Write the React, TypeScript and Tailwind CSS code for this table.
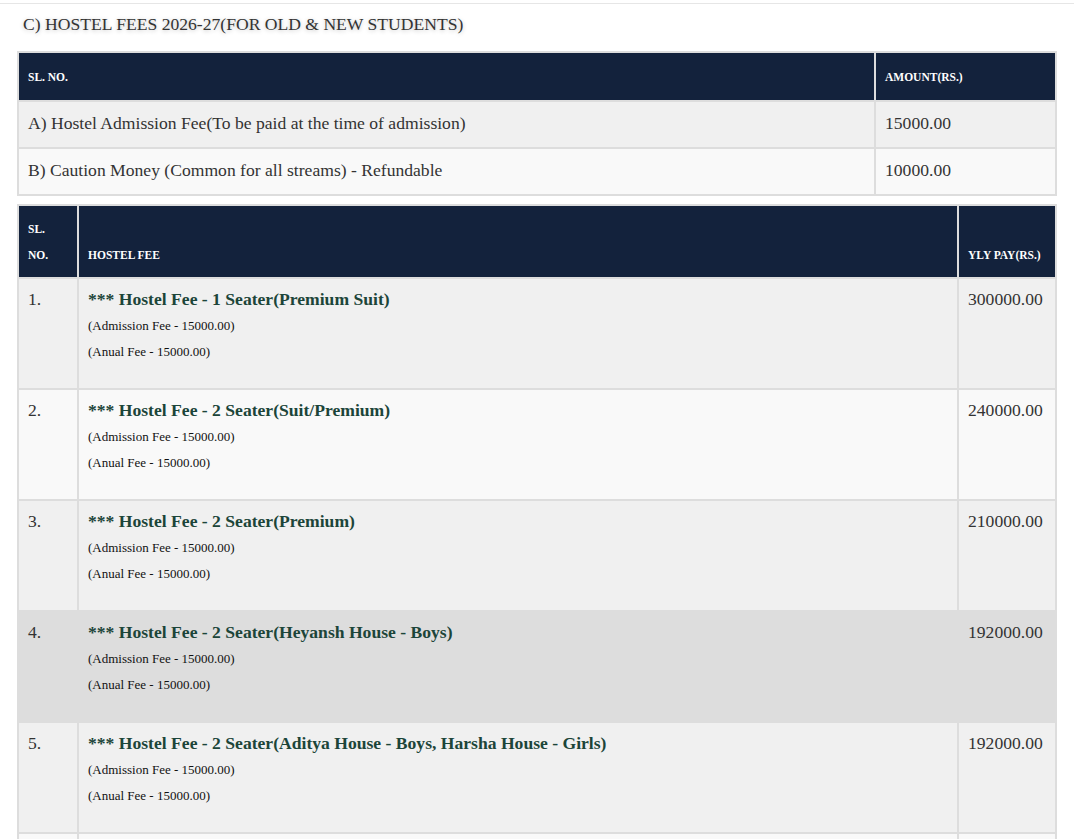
import React from "react";

const rows = [
  { n: "1.", t: "*** Hostel Fee - 1 Seater(Premium Suit)", a: "300000.00", bg: "bg-[#f0f0f0]" },
  { n: "2.", t: "*** Hostel Fee - 2 Seater(Suit/Premium)", a: "240000.00", bg: "bg-[#f9f9f9]" },
  { n: "3.", t: "*** Hostel Fee - 2 Seater(Premium)", a: "210000.00", bg: "bg-[#f0f0f0]" },
  { n: "4.", t: "*** Hostel Fee - 2 Seater(Heyansh House - Boys)", a: "192000.00", bg: "bg-[#dddddd]" },
  { n: "5.", t: "*** Hostel Fee - 2 Seater(Aditya House - Boys, Harsha House - Girls)", a: "192000.00", bg: "bg-[#f0f0f0]" },
  { n: "6.", t: "*** Hostel Fee - 2 Seater(Standard)", a: "180000.00", bg: "bg-[#f9f9f9]" },
];

const thBase = "border-2 border-[#dddddd] bg-[#13223c] text-white text-[11.5px] font-bold leading-[26px] pl-[9px] pr-[4px] align-bottom text-left";
const th1 = thBase + " pt-[11px] pb-[10px]";
const th2 = thBase + " pt-[10px] pb-[9px]";
const td = "border-2 border-[#dddddd] text-[#333] text-[17.6px] px-[9px] align-top text-left";

export default function App() {
  return (
    <div className="min-h-[839px] bg-white" style={{ fontFamily: '"Liberation Serif", "Times New Roman", serif' }}>
      <div className="pt-[3px]">
        <div className="border-t border-[#e6e6e6]" />
      </div>
      <div className="px-[17px]">
        <h2
          className="pl-[6px] pt-[9px] pb-[16px] text-[17.6px] leading-[22px] text-[#333] font-normal"
          style={{ textShadow: "0 1px 4px rgba(0,0,0,0.25)" }}
        >
          C) HOSTEL FEES 2026-27(FOR OLD &amp; NEW STUDENTS)
        </h2>
        <table className="w-full border-collapse border-2 border-[#dddddd]">
          <thead>
            <tr>
              <th className={th1}>SL. NO.</th>
              <th className={th1 + " w-[181px]"}>AMOUNT(RS.)</th>
            </tr>
          </thead>
          <tbody>
            <tr className="bg-[#f0f0f0]">
              <td className={td + " leading-[26px] pt-[8px] pb-[11px]"}>A) Hostel Admission Fee(To be paid at the time of admission)</td>
              <td className={td + " leading-[26px] pt-[8px] pb-[11px]"}>15000.00</td>
            </tr>
            <tr className="bg-[#f9f9f9]">
              <td className={td + " leading-[26px] pt-[8px] pb-[11px]"}>B) Caution Money (Common for all streams) - Refundable</td>
              <td className={td + " leading-[26px] pt-[8px] pb-[11px]"}>10000.00</td>
            </tr>
          </tbody>
        </table>
        <table className="mt-[8px] w-full border-collapse border-2 border-[#dddddd]">
          <thead>
            <tr>
              <th className={th2 + " w-[60px]"}>
                SL.
                <br />
                NO.
              </th>
              <th className={th2}>HOSTEL FEE</th>
              <th className={th2 + " w-[98px]"}>YLY PAY(RS.)</th>
            </tr>
          </thead>
          <tbody>
            {rows.map((r) => (
              <tr key={r.n} className={r.bg}>
                <td className={td + " leading-[28px] pt-[6px] pb-[23px]"}>{r.n}</td>
                <td className={td + " leading-[28px] pt-[6px] pb-[23px]"}>
                  <div className="font-bold text-[#1c4539] text-[17.6px] leading-[28px]">{r.t}</div>
                  <div className="text-[13px] leading-[26px] text-[#111]">(Admission Fee - 15000.00)</div>
                  <div className="text-[13px] leading-[26px] text-[#111]">(Anual Fee - 15000.00)</div>
                </td>
                <td className={td + " leading-[28px] pt-[6px] pb-[23px]"}>{r.a}</td>
              </tr>
            ))}
          </tbody>
        </table>
      </div>
    </div>
  );
}
